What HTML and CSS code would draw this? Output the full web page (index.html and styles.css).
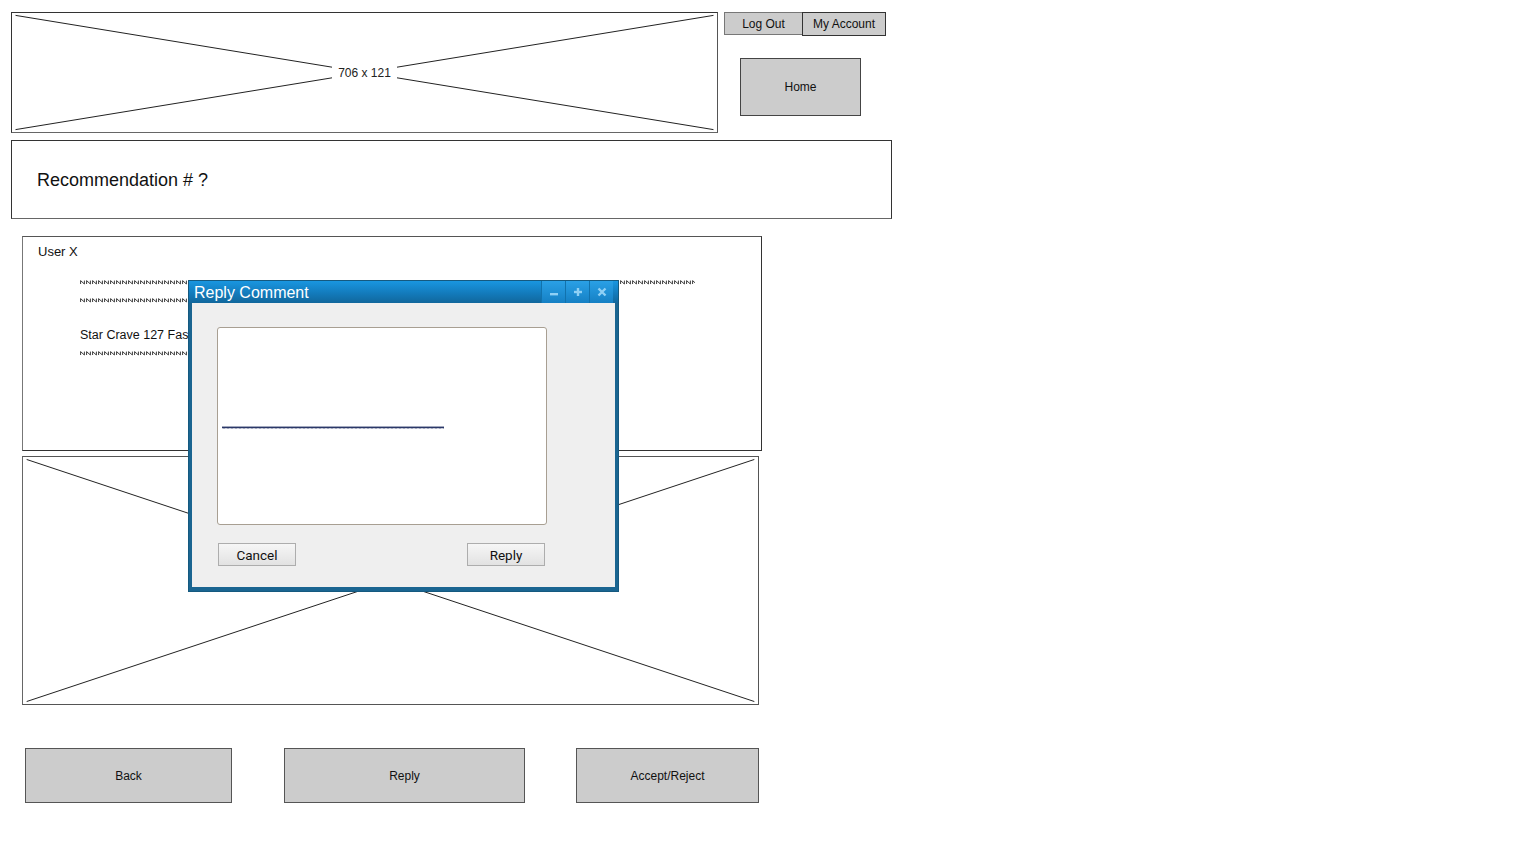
FILE: index.html
```html
<!DOCTYPE html>
<html>
<head>
<meta charset="utf-8">
<link rel="stylesheet" href="styles.css">
</head>
<body>
<svg class="defs" width="0" height="0" aria-hidden="true">
  <defs>
    <pattern id="zz" width="6" height="6" patternUnits="userSpaceOnUse">
      <path d="M0.6 5 L0.6 1.6 L4.4 5 L4.4 1.6" stroke="#262626" stroke-width="0.9" fill="none"/>
    </pattern>
    <pattern id="wv" width="4" height="5" patternUnits="userSpaceOnUse">
      <path d="M0 3.5 L1 1.5 L2 3.5 L3 1.5 L4 3.5" stroke="#2b3868" stroke-width="1" fill="none"/>
    </pattern>
  </defs>
</svg>
<div class="page">
  <div class="top">
    <div class="ph banner">
      <svg class="x" preserveAspectRatio="none" viewBox="0 0 100 100"><line x1="0.5" y1="2" x2="99.5" y2="98" vector-effect="non-scaling-stroke"/><line x1="0.5" y1="98" x2="99.5" y2="2" vector-effect="non-scaling-stroke"/></svg>
      <span class="ph-label">706 x 121</span>
    </div>
    <div class="side">
      <div class="tabs">
        <div class="btn tab logout">Log Out</div>
        <div class="btn tab account">My Account</div>
      </div>
      <div class="btn home">Home</div>
    </div>
  </div>

  <div class="reco">Recommendation # ?</div>

  <div class="post">
    <div class="user">User X</div>
    <svg class="squig w1" height="6"><rect width="100%" height="6" fill="url(#zz)"/></svg>
    <svg class="squig w2" height="6"><rect width="100%" height="6" fill="url(#zz)"/></svg>
    <div class="title">Star Crave 127 Fast Reply</div>
    <svg class="squig w3" height="6"><rect width="100%" height="6" fill="url(#zz)"/></svg>
  </div>

  <div class="ph photo">
    <svg class="x" preserveAspectRatio="none" viewBox="0 0 100 100"><line x1="0.5" y1="1" x2="99.5" y2="99" vector-effect="non-scaling-stroke"/><line x1="0.5" y1="99" x2="99.5" y2="1" vector-effect="non-scaling-stroke"/></svg>
    <span class="ph-label">737 x 248</span>
  </div>

  <div class="actions">
    <div class="btn act back">Back</div>
    <div class="btn act reply">Reply</div>
    <div class="btn act accept">Accept/Reject</div>
  </div>

  <div class="dialog">
    <div class="dlg-bar">
      <span class="dlg-title">Reply Comment</span>
      <div class="dlg-icons">
        <span class="ic"><svg width="10" height="10" viewBox="0 0 10 10"><rect x="1" y="6" width="8" height="2.4" fill="#8fd0f5"/></svg></span>
        <span class="ic"><svg width="10" height="10" viewBox="0 0 10 10"><rect x="1" y="3.8" width="8" height="2.4" fill="#8fd0f5"/><rect x="3.8" y="1" width="2.4" height="8" fill="#8fd0f5"/></svg></span>
        <span class="ic"><svg width="10" height="10" viewBox="0 0 10 10"><path d="M1.5 1.5 L8.5 8.5 M8.5 1.5 L1.5 8.5" stroke="#8fd0f5" stroke-width="2.4"/></svg></span>
      </div>
    </div>
    <div class="dlg-body">
      <div class="textarea">
        <svg class="wave" width="222" height="5"><rect width="222" height="5" fill="url(#wv)"/></svg>
      </div>
      <div class="dlg-btns">
        <div class="wbtn">Cancel</div>
        <div class="wbtn">Reply</div>
      </div>
    </div>
  </div>
</div>
</body>
</html>
```

FILE: styles.css
```css
* { box-sizing: border-box; }
html, body { margin: 0; padding: 0; background: #fff; }
body { font-family: "Liberation Sans", Arial, sans-serif; color: #111; }

.defs { position: absolute; width: 0; height: 0; }

.page {
  position: relative;
  width: 1531px;
  height: 848px;
  padding: 12px 0 0 11px;
}

.top { display: flex; align-items: flex-start; }

.ph {
  position: relative;
  border: 1px solid #333;
  border-right-color: #555;
  border-bottom-color: #666;
  background: #fff;
  display: flex;
  align-items: center;
  justify-content: center;
}
.ph .x {
  position: absolute;
  inset: 0;
  width: 100%;
  height: 100%;
}
.ph .x line { stroke: #222; stroke-width: 1; }
.ph-label {
  position: relative;
  background: #fff;
  padding: 0 6px;
  font-size: 12px;
  color: #222;
  line-height: 16px;
}
.banner { width: 707px; height: 121px; }

.side { margin-left: 6px; display: flex; flex-direction: column; }
.tabs { display: flex; align-items: flex-start; }
.btn {
  background: #cccccc;
  border: 1px solid #555;
  display: flex;
  align-items: center;
  justify-content: center;
  font-size: 12px;
  color: #111;
}
.tab { height: 24px; }
.logout { width: 79px; border-color: #777; height: 23px; }
.account { width: 84px; border-color: #333; margin-left: -1px; }
.home {
  width: 121px;
  height: 58px;
  margin: 22px 0 0 16px;
  border-color: #444;
}

.reco {
  margin-top: 7px;
  width: 881px;
  height: 79px;
  border: 1px solid #333;
  border-bottom-color: #666;
  display: flex;
  align-items: center;
  padding-left: 25px;
  padding-top: 1px;
  font-size: 18px;
  color: #111;
}

.post {
  margin: 17px 0 0 11px;
  width: 740px;
  height: 215px;
  border: 1px solid #333;
  border-left-color: #777;
  border-top-color: #555;
  padding: 7px 0 0 15px;
}
.user { font-size: 13px; line-height: 16px; }
.squig {
  display: block;
  height: 6px;
  margin-left: 42px;
}
.w1 { width: 615px; margin-top: 19px; }
.w2 { width: 540px; margin-top: 12px; }
.w3 { width: 480px; margin-top: 7px; }
.title {
  margin: 24px 0 0 42px;
  font-size: 12.5px;
  line-height: 16px;
}

.photo {
  margin: 5px 0 0 11px;
  width: 737px;
  height: 249px;
  border-color: #555;
  border-left-color: #666;
}

.actions {
  display: flex;
  margin: 43px 0 0 14px;
}
.act {
  height: 55px;
  border: 1px solid #555;
}
.back { width: 207px; }
.reply { width: 241px; margin-left: 52px; }
.accept { width: 183px; margin-left: 51px; }

.dialog {
  position: absolute;
  left: 188px;
  top: 280px;
  width: 431px;
  height: 312px;
  background: #1a6591;
  border: 1px solid #15597f;
  display: flex;
  flex-direction: column;
  padding: 0 3px 4px 3px;
  font-family: Roboto, "Liberation Sans", Arial, sans-serif;
}
.dlg-bar {
  height: 22px;
  margin: 0 -3px;
  background: linear-gradient(#1996e0, #137bbc 55%, #11679c);
  display: flex;
  align-items: center;
  justify-content: space-between;
  padding-left: 5px;
}
.dlg-title {
  color: #fff;
  font-family: "Liberation Sans", Arial, sans-serif;
  font-size: 16px;
  line-height: 22px;
  margin-top: 1px;
}
.dlg-icons { display: flex; height: 22px; margin-right: 5px; }
.ic {
  width: 24px;
  height: 22px;
  display: flex;
  align-items: center;
  justify-content: center;
  background: linear-gradient(#2aa0e6, #1580c4);
  border-left: 1px solid #1172ad;
}
.dlg-body {
  flex: 1;
  background: #efefef;
  padding: 24px 0 0 25px;
}
.textarea {
  width: 330px;
  height: 198px;
  background: #fff;
  border: 1px solid #a89f92;
  border-radius: 3px;
  padding: 97px 0 0 4px;
}
.wave { display: block; }
.dlg-btns {
  display: flex;
  justify-content: space-between;
  width: 327px;
  margin-top: 18px;
  margin-left: 1px;
}
.wbtn {
  width: 78px;
  height: 23px;
  border: 1px solid #adadad;
  background: linear-gradient(#f6f6f6, #e2e2e2);
  font-size: 13.5px;
  color: #111;
  display: flex;
  align-items: center;
  justify-content: center;
}
```
